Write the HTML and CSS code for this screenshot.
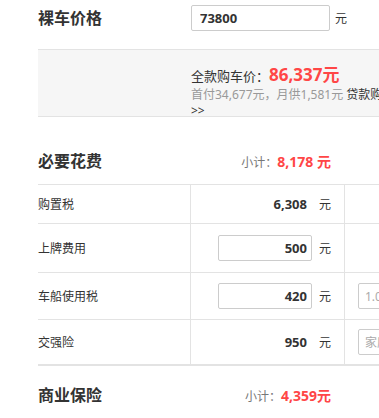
FILE: index.html
```html
<!DOCTYPE html>
<html lang="zh-CN">
<head>
  <meta charset="UTF-8" />
  <title>购车计算器</title>
  <link rel="stylesheet" href="styles.css">
</head>
<body>

  <div class="calc">
    <!-- 裸车价格 -->
    <div class="price-row">
      <h2 class="title">裸车价格</h2>
      <input class="price-input" type="text" value="73800" />
      <span class="unit">元</span>
    </div>

    <!-- 总价 -->
    <div class="total-box">
      <div class="total-text">
        <p class="total-line">全款购车价<span class="colon">：</span><strong class="red total-num">86,337元</strong></p>
        <p class="loan-line">首付34,677元，月供1,581元 <a href="#">贷款购车 &gt;&gt;</a></p>
      </div>
    </div>

    <!-- 必要花费 -->
    <div class="section-head">
      <h2 class="title">必要花费</h2>
      <p class="subtotal">小计：<strong class="red">8,178 元</strong></p>
    </div>

    <div class="fee-table">
      <div class="fee-row row-1">
        <div class="cell name">购置税</div>
        <div class="cell value"><span class="num">6,308</span><span class="unit">元</span></div>
        <div class="cell extra"></div>
      </div>
      <div class="fee-row row-2">
        <div class="cell name">上牌费用</div>
        <div class="cell value"><input class="fee-input" type="text" value="500" /><span class="unit">元</span></div>
        <div class="cell extra"></div>
      </div>
      <div class="fee-row row-3">
        <div class="cell name">车船使用税</div>
        <div class="cell value"><input class="fee-input" type="text" value="420" /><span class="unit">元</span></div>
        <div class="cell extra"><input class="opt-input" type="text" placeholder="1.0L(含)以下" /></div>
      </div>
      <div class="fee-row row-4">
        <div class="cell name">交强险</div>
        <div class="cell value"><span class="num">950</span><span class="unit">元</span></div>
        <div class="cell extra"><input class="opt-input" type="text" placeholder="家庭自用" /></div>
      </div>
    </div>

    <!-- 商业保险 -->
    <div class="section-head second">
      <h2 class="title">商业保险</h2>
      <p class="subtotal">小计：<strong class="red">4,359元</strong></p>
    </div>
  </div>

</body>
</html>
```

FILE: styles.css
```css
/* === Base === */
body {
  margin: 0;
  background: #ffffff;
  font-family: "Noto Sans", "Noto Sans CJK SC", sans-serif;
  color: #333333;
  overflow: hidden;
}

p {
  margin: 0;
}

.calc {
  width: 560px;
  padding-left: 38px;
}

.title {
  margin: 0;
  width: 153px;
  font-size: 16px;
  font-weight: 700;
  line-height: 20px;
  color: #333333;
}

.red {
  color: #ff4646;
  font-weight: 700;
}

.unit {
  font-size: 12px;
  color: #333333;
}

/* === Price row === */
.price-row {
  display: flex;
  align-items: center;
  height: 36px;
  padding-bottom: 13px;
}

.price-input {
  box-sizing: border-box;
  width: 139px;
  height: 26px;
  margin: 0 5px 0 0;
  padding: 0 8px;
  border: 1px solid #cccccc;
  border-radius: 2px;
  font-family: inherit;
  font-size: 13px;
  font-weight: 700;
  color: #333333;
}

/* === Total box === */
.total-box {
  background: #f6f6f6;
  border-top: 1px solid #e3e3e3;
  border-bottom: 1px solid #e3e3e3;
  height: 66px;
  overflow: hidden;
}

.total-text {
  width: 215px;
  margin-left: 153px;
  padding-top: 14px;
}

.total-line {
  font-size: 13px;
  line-height: 22px;
}

.colon {
  font-family: "Noto Sans CJK TC", sans-serif;
}

.total-num {
  font-size: 17px;
}

.loan-line {
  font-size: 12px;
  line-height: 16px;
  color: #999999;
}

.loan-line a {
  color: #333333;
  text-decoration: none;
}

/* === Section heads === */
.section-head {
  display: flex;
  align-items: center;
  width: 293px;
  height: 46px;
  margin-top: 21px;
}

.section-head.second {
  margin-top: 6px;
}

.subtotal {
  flex: 1;
  text-align: right;
  font-size: 12px;
  color: #777777;
}

.subtotal .red {
  font-size: 14px;
}

/* === Fee table === */
.fee-table {
  border-top: 1px solid #e3e3e3;
}

.fee-row {
  display: flex;
  box-sizing: border-box;
  border-bottom: 1px solid #e3e3e3;
}

.row-1 { height: 39px; }
.row-2 { height: 49px; }
.row-3 { height: 47px; }
.row-4 {
  height: 46px;
  border-bottom-width: 2px;
}

.cell {
  display: flex;
  align-items: center;
  box-sizing: border-box;
  font-size: 12px;
}

.name {
  width: 153px;
  border-right: 1px solid #e3e3e3;
}

.value {
  width: 154px;
  justify-content: flex-end;
  padding-right: 13px;
  border-right: 1px solid #e3e3e3;
}

.value .unit {
  margin-left: 7px;
}

.num {
  padding-right: 5px;
  font-size: 13px;
  font-weight: 700;
}

.fee-input {
  box-sizing: border-box;
  width: 94px;
  height: 26px;
  margin: 0;
  padding: 0 4px;
  border: 1px solid #cccccc;
  border-radius: 2px;
  text-align: right;
  font-family: inherit;
  font-size: 13px;
  font-weight: 700;
  color: #333333;
}

.extra {
  padding-left: 13px;
}

.opt-input {
  box-sizing: border-box;
  width: 110px;
  height: 26px;
  margin: 0;
  padding: 0 6px;
  border: 1px solid #cccccc;
  border-radius: 2px;
  font-family: inherit;
  font-size: 12px;
}

.opt-input::placeholder {
  color: #aaaaaa;
}
```
